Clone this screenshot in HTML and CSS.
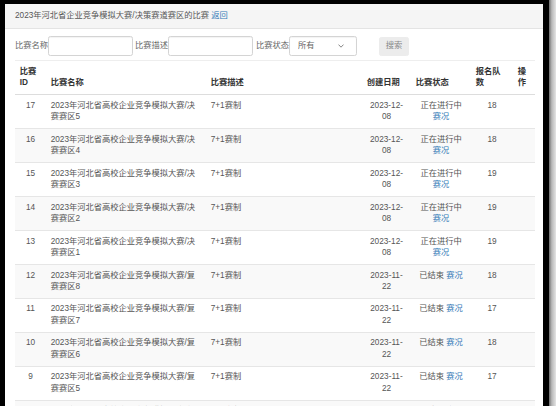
FILE: index.html
```html
<!DOCTYPE html>
<html lang="zh-CN">
<head>
<meta charset="utf-8">
<title>比赛列表</title>
<link rel="stylesheet" href="styles.css">
</head>
<body>
<div class="frame">
  <div class="screen">
    <div class="heading">2023年河北省企业竞争模拟大赛/决策赛道赛区的比赛 <a href="#">返回</a></div>
    <div class="content">
      <form class="search">
        <label class="lbl">比赛名称</label><input class="ctl txt" type="text">
        <label class="lbl l2">比赛描述</label><input class="ctl txt" type="text">
        <label class="lbl l3">比赛状态</label>
        <span class="selwrap"><select class="ctl sel"><option>所有</option></select><svg class="chev" width="6" height="4" viewBox="0 0 6 4"><path d="M0.5 0.6 L3 3.2 L5.5 0.6" fill="none" stroke="#777" stroke-width="0.9"/></svg></span>
        <button class="btn" type="button">搜索</button>
      </form>
      <table class="grid">
        <colgroup>
          <col class="c-id"><col class="c-name"><col class="c-desc"><col class="c-date"><col class="c-state"><col class="c-num"><col class="c-op">
        </colgroup>
        <thead>
          <tr><th>比赛ID</th><th>比赛名称</th><th>比赛描述</th><th>创建日期</th><th>比赛状态</th><th>报名队数</th><th>操作</th></tr>
        </thead>
        <tbody>
          <tr><td class="ctr">17</td><td>2023年河北省高校企业竞争模拟大赛/决赛赛区5</td><td>7+1赛制</td><td class="ctr">2023-12-08</td><td class="ctr">正在进行中 <a href="#">赛况</a></td><td class="ctr">18</td><td></td></tr>
          <tr><td class="ctr">16</td><td>2023年河北省高校企业竞争模拟大赛/决赛赛区4</td><td>7+1赛制</td><td class="ctr">2023-12-08</td><td class="ctr">正在进行中 <a href="#">赛况</a></td><td class="ctr">18</td><td></td></tr>
          <tr><td class="ctr">15</td><td>2023年河北省高校企业竞争模拟大赛/决赛赛区3</td><td>7+1赛制</td><td class="ctr">2023-12-08</td><td class="ctr">正在进行中 <a href="#">赛况</a></td><td class="ctr">19</td><td></td></tr>
          <tr><td class="ctr">14</td><td>2023年河北省高校企业竞争模拟大赛/决赛赛区2</td><td>7+1赛制</td><td class="ctr">2023-12-08</td><td class="ctr">正在进行中 <a href="#">赛况</a></td><td class="ctr">19</td><td></td></tr>
          <tr><td class="ctr">13</td><td>2023年河北省高校企业竞争模拟大赛/决赛赛区1</td><td>7+1赛制</td><td class="ctr">2023-12-08</td><td class="ctr">正在进行中 <a href="#">赛况</a></td><td class="ctr">19</td><td></td></tr>
          <tr><td class="ctr">12</td><td>2023年河北省高校企业竞争模拟大赛/复赛赛区8</td><td>7+1赛制</td><td class="ctr">2023-11-22</td><td class="ctr">已结束 <a href="#">赛况</a></td><td class="ctr">18</td><td></td></tr>
          <tr><td class="ctr">11</td><td>2023年河北省高校企业竞争模拟大赛/复赛赛区7</td><td>7+1赛制</td><td class="ctr">2023-11-22</td><td class="ctr">已结束 <a href="#">赛况</a></td><td class="ctr">17</td><td></td></tr>
          <tr><td class="ctr">10</td><td>2023年河北省高校企业竞争模拟大赛/复赛赛区6</td><td>7+1赛制</td><td class="ctr">2023-11-22</td><td class="ctr">已结束 <a href="#">赛况</a></td><td class="ctr">18</td><td></td></tr>
          <tr><td class="ctr">9</td><td>2023年河北省高校企业竞争模拟大赛/复赛赛区5</td><td>7+1赛制</td><td class="ctr">2023-11-22</td><td class="ctr">已结束 <a href="#">赛况</a></td><td class="ctr">17</td><td></td></tr>
          <tr><td class="ctr">8</td><td>2023年河北省高校企业竞争模拟大赛/复赛赛区4</td><td>7+1赛制</td><td class="ctr">2023-11-22</td><td class="ctr">已结束 <a href="#">赛况</a></td><td class="ctr">18</td><td></td></tr>
        </tbody>
      </table>
    </div>
  </div>
  <div class="edge"></div>
  <div class="shade"></div>
</div>
</body>
</html>
```
FILE: styles.css
```css
html, body {
  margin: 0;
  padding: 0;
  background: #000;
}
body {
  width: 556px;
  height: 406px;
  overflow: hidden;
  font-family: "Liberation Sans", "Noto Sans CJK SC", sans-serif;
  font-size: 8.26px;
  line-height: 11.8px;
  color: #444;
}
a {
  color: #337ab7;
  text-decoration: none;
}
.frame {
  display: flex;
  height: 406px;
  padding: 4px 0 0 5px;
  box-sizing: border-box;
  background: #000;
}
.screen {
  width: 538px;
  height: 402px;
  background: #fff;
  overflow: hidden;
  flex: none;
}
.edge {
  width: 6px;
  flex: none;
  background: #000;
}
.shade {
  width: 7px;
  flex: none;
  margin-top: -4px;
  background: linear-gradient(to right, #6e6e6e, #b8b8b8 40%, #e4e4e4);
}
.heading {
  background: #f5f5f5;
  border-bottom: 1px solid #e4e4e4;
  padding: 6px 9px 6px 10px;
  color: #555;
  height: 12px;
}
.content {
  padding: 0 8px 0 10px;
}
.search {
  display: flex;
  align-items: center;
  margin: 7px 0 0 0;
  height: 20px;
}
.lbl {
  color: #666;
  white-space: nowrap;
}
.l2 {
  margin-left: 2px;
}
.l3 {
  margin-left: 3px;
}
.ctl {
  box-sizing: border-box;
  height: 20px;
  border: 1px solid #d4d4d4;
  border-radius: 2.4px;
  background: #fff;
  box-shadow: inset 0 1px 1px rgba(0,0,0,0.05);
  font: inherit;
  color: #666;
  margin: 0;
}
.txt {
  width: 85px;
  padding: 0 6px;
}
.selwrap {
  position: relative;
  display: block;
  width: 68px;
  height: 20px;
}
.sel {
  -webkit-appearance: none;
  appearance: none;
  width: 68px;
  padding: 0 12px 0 8px;
}
.chev {
  position: absolute;
  right: 13px;
  top: 8px;
}
.btn {
  margin-left: 22px;
  width: 30px;
  height: 19px;
  padding: 0;
  border: 1px solid #ececec;
  border-radius: 2.4px;
  background: #ececec;
  color: #888;
  font: inherit;
}
.grid {
  margin-top: 4px;
  width: 520px;
  table-layout: fixed;
  border-collapse: collapse;
  border-spacing: 0;
}
.c-id { width: 31px; }
.c-name { width: 160px; }
.c-desc { width: 156px; }
.c-date { width: 49px; }
.c-state { width: 60px; }
.c-num { width: 42px; }
.c-op { width: 22px; }
.grid th {
  text-align: left;
  vertical-align: bottom;
  font-weight: bold;
  color: #333;
  padding: 4.7px;
  border-top: 1px solid #eee;
  border-bottom: 1.2px solid #ddd;
}
.grid td {
  text-align: left;
  vertical-align: top;
  padding: 4.7px;
  border-top: 1px solid #e6e6e6;
  color: #555;
}
.grid td.ctr {
  text-align: center;
}
.grid tbody tr:nth-child(even) {
  background: #f9f9f9;
}
```
